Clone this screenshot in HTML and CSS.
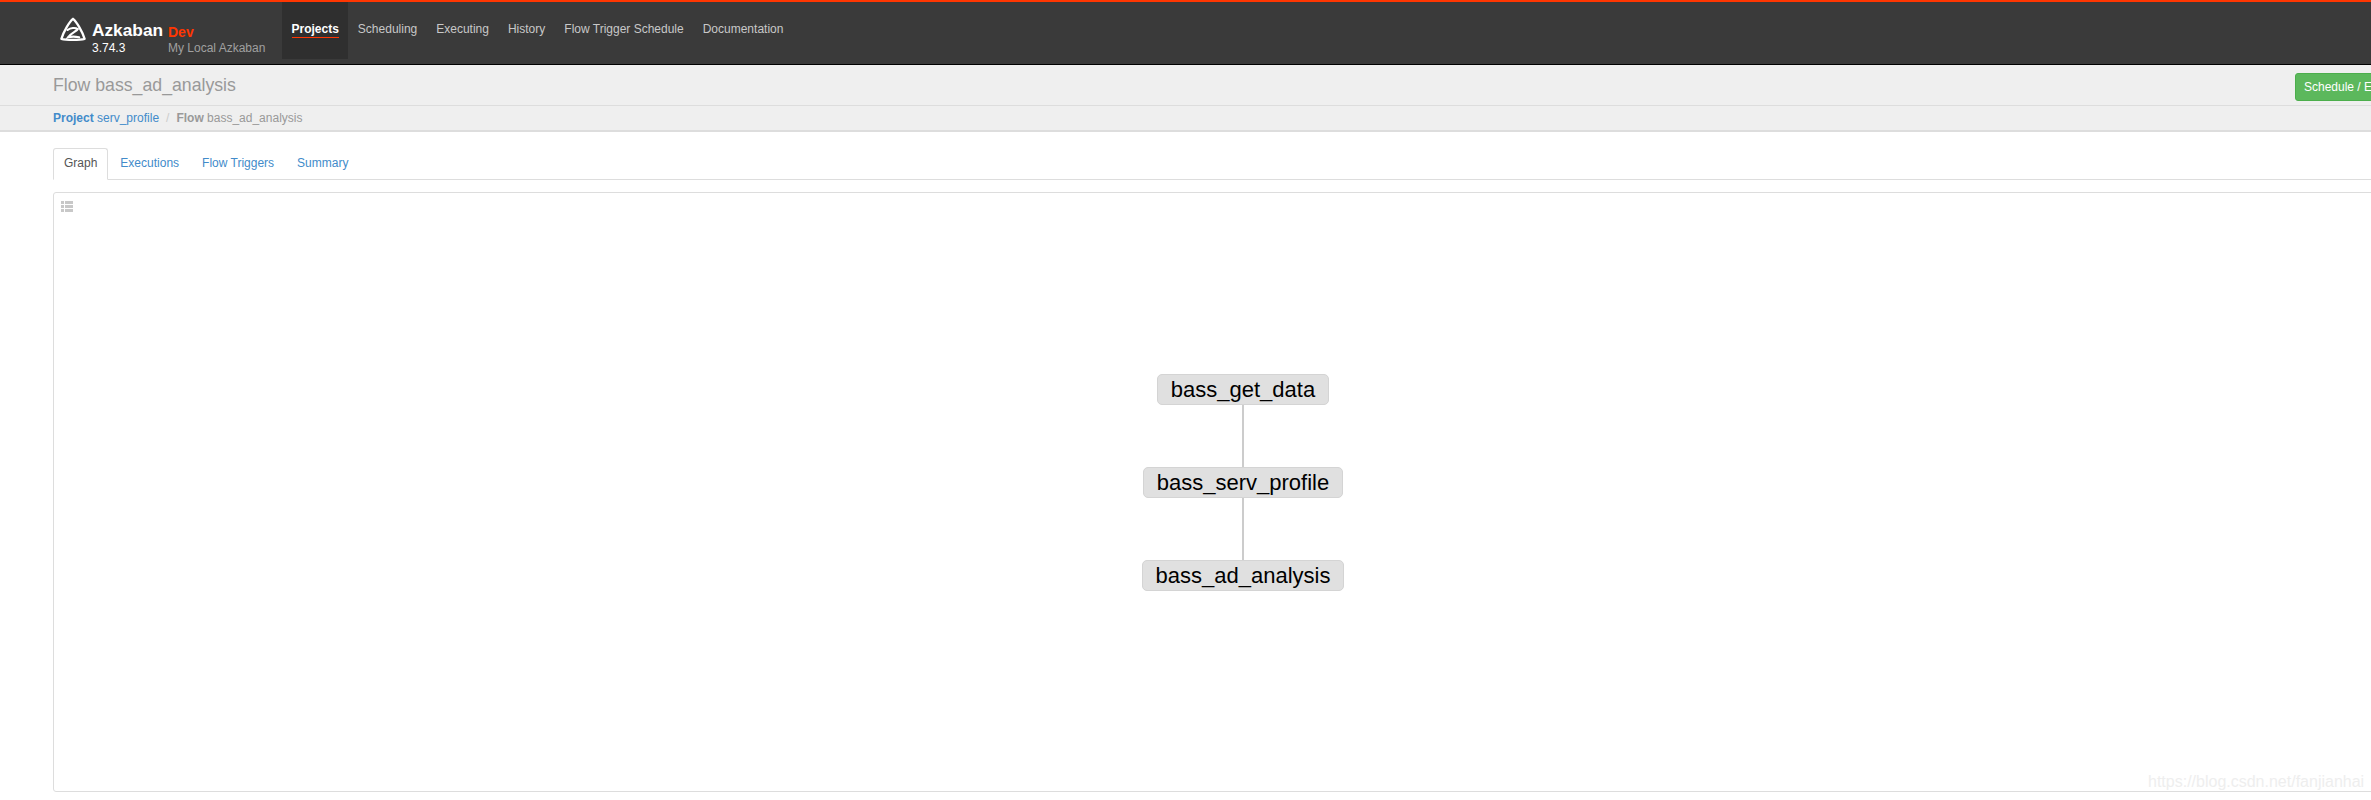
FILE: index.html
```html
<!DOCTYPE html>
<html lang="en">
<head>
<meta charset="utf-8">
<title>Azkaban Flow</title>
<link rel="stylesheet" href="styles.css">
</head>
<body>
<div class="page">
  <header class="navbar">
    <div class="brand">
      <svg class="logo" viewBox="0 0 26 25" width="26" height="25" aria-hidden="true">
        <path d="M13 1.8 C9.5 4.5 3.6 14.5 1.4 21.8 C6 23.2 20 23.2 24.6 21.8 C22.4 14.5 16.5 4.5 13 1.8 Z" fill="none" stroke="#fff" stroke-width="2.3" stroke-linejoin="round"/>
        <path d="M7.6 13 C10.5 10.7 15.5 10.4 17.8 12 C17 14 10.8 16 8 20.3 C11 19.4 15 19.4 19.2 20.2" fill="none" stroke="#fff" stroke-width="2.1" stroke-linecap="round"/>
      </svg>
      <div class="brand-name">
        <span class="brand-title">Azkaban</span>
        <span class="brand-version">3.74.3</span>
      </div>
      <div class="brand-env">
        <span class="env-dev">Dev</span>
        <span class="env-name">My Local Azkaban</span>
      </div>
    </div>
    <nav class="nav">
      <a class="nav-item nav-active"><span>Projects</span></a>
      <a class="nav-item"><span>Scheduling</span></a>
      <a class="nav-item"><span>Executing</span></a>
      <a class="nav-item"><span>History</span></a>
      <a class="nav-item"><span>Flow Trigger Schedule</span></a>
      <a class="nav-item"><span>Documentation</span></a>
    </nav>
  </header>

  <section class="titlebar">
    <h1 class="title">Flow bass_ad_analysis</h1>
    <button class="btn-schedule">Schedule / Execute Flow</button>
  </section>

  <section class="crumbs">
    <a class="crumb-link"><b>Project</b> serv_profile</a>
    <span class="crumb-sep">/</span>
    <span class="crumb-current"><b>Flow</b> bass_ad_analysis</span>
  </section>

  <main class="content">
    <ul class="tabs">
      <li class="tab tab-active">Graph</li>
      <li class="tab">Executions</li>
      <li class="tab">Flow Triggers</li>
      <li class="tab">Summary</li>
    </ul>
    <div class="graph">
      <svg class="list-icon" viewBox="0 0 12 11" width="12" height="11" aria-hidden="true">
        <path fill="#c8c8c8" d="M0 0h3v3H0zM4 0h8v3H4zM0 4h3v3H0zM4 4h8v3H4zM0 8h3v3H0zM4 8h8v3H4z"/>
      </svg>
      <div class="edge edge-1"></div>
      <div class="edge edge-2"></div>
      <div class="node node-1">bass_get_data</div>
      <div class="node node-2">bass_serv_profile</div>
      <div class="node node-3">bass_ad_analysis</div>
    </div>
  </main>
</div>
<div class="watermark">https://blog.csdn.net/fanjianhai</div>
</body>
</html>
```

FILE: styles.css
```css
html, body {
  margin: 0;
  padding: 0;
  height: 100%;
  background: #fff;
  overflow: hidden;
}

body {
  font-family: "Liberation Sans", Arial, sans-serif;
  font-size: 12px;
  color: #333;
}

.page {
  width: 2600px;
}

.navbar {
  box-sizing: border-box;
  height: 65px;
  display: flex;
  align-items: flex-start;
  background: #3a3a3a;
  border-top: 2px solid #ff3601;
  border-bottom: 1px solid #000;
  padding-left: 60px;
}

.brand {
  display: flex;
  width: 222px;
  padding-top: 15px;
}

.logo {
  flex: none;
  margin-right: 6px;
}

.brand-name {
  display: flex;
  flex-direction: column;
  width: 76px;
}

.brand-title {
  font-size: 17.3px;
  font-weight: bold;
  line-height: 20px;
  margin-top: 3px;
  color: #fff;
}

.brand-version {
  font-size: 12px;
  line-height: 14px;
  margin-top: 1px;
  color: #fff;
}

.brand-env {
  display: flex;
  flex-direction: column;
}

.env-dev {
  font-size: 14px;
  font-weight: bold;
  line-height: 16px;
  margin-top: 7px;
  color: #ff3601;
}

.env-name {
  font-size: 12px;
  line-height: 14px;
  margin-top: 1px;
  color: #a0a0a0;
}

.nav {
  display: flex;
}

.nav-item {
  display: block;
  height: 57px;
  box-sizing: border-box;
  padding: 20px 9.5px 0;
  color: #c8c8c8;
  font-size: 12px;
  line-height: 14px;
}

.nav-item span {
  display: block;
}

.nav-active {
  background: #2f2f2f;
  font-weight: bold;
  color: #fff;
}

.nav-active span {
  padding-bottom: 1px;
  border-bottom: 1px solid #ff3601;
}

.titlebar {
  box-sizing: border-box;
  height: 41px;
  display: flex;
  align-items: flex-start;
  justify-content: space-between;
  background: #efefef;
  border-bottom: 1px solid #ddd;
  padding: 8px 200px 0 53px;
}

.title {
  margin: 0;
  font-size: 17.7px;
  font-weight: normal;
  line-height: 24px;
  color: #999;
}

.btn-schedule {
  box-sizing: border-box;
  width: 105px;
  height: 28px;
  padding: 0 8px;
  white-space: nowrap;
  text-align: left;
  font-family: inherit;
  font-size: 12px;
  font-weight: normal;
  color: #fff;
  background: #5cb85c;
  border: 1px solid #4cae4c;
  border-radius: 3px;
}

.crumbs {
  box-sizing: border-box;
  height: 26px;
  display: flex;
  align-items: center;
  background: #efefef;
  border-bottom: 2px solid #ddd;
  padding-left: 53px;
  color: #999;
  font-size: 12px;
}

.crumb-link {
  color: #428bca;
}

.crumb-sep {
  margin: 0 7px;
  color: #ccc;
}

.content {
  padding: 16px 0 0 53px;
}

.tabs {
  display: flex;
  list-style: none;
  margin: 0;
  padding: 0;
  height: 32px;
  box-sizing: border-box;
  border-bottom: 1px solid #ddd;
}

.tab {
  box-sizing: border-box;
  height: 32px;
  padding: 7px 10px 0;
  margin-right: 1px;
  line-height: 14px;
  font-size: 12px;
  color: #428bca;
  border: 1px solid transparent;
}

.tab-active {
  color: #555;
  background: #fff;
  border-color: #ddd #ddd #fff;
  border-radius: 3px 3px 0 0;
}

.graph {
  position: relative;
  box-sizing: border-box;
  height: 600px;
  margin-top: 12px;
  border: 1px solid #ddd;
  border-radius: 3px;
  background: #fff;
}

.list-icon {
  position: absolute;
  left: 7px;
  top: 8px;
}

.node {
  position: absolute;
  box-sizing: border-box;
  height: 31px;
  line-height: 30px;
  text-align: center;
  font-size: 22px;
  color: #000;
  background: #e0e0e0;
  border: 1px solid #d4d4d4;
  border-radius: 5px;
  white-space: nowrap;
}

.node-1 {
  left: 1103px;
  top: 181px;
  width: 172px;
}

.node-2 {
  left: 1089px;
  top: 274px;
  width: 200px;
}

.node-3 {
  left: 1088px;
  top: 367px;
  width: 202px;
}

.edge {
  position: absolute;
  left: 1188px;
  width: 2px;
  background: #ccc;
}

.edge-1 {
  top: 211px;
  height: 63px;
}

.edge-2 {
  top: 304px;
  height: 63px;
}

.watermark {
  position: absolute;
  left: 2148px;
  top: 772px;
  font-size: 16px;
  line-height: 20px;
  color: #eee;
  white-space: nowrap;
}
```
